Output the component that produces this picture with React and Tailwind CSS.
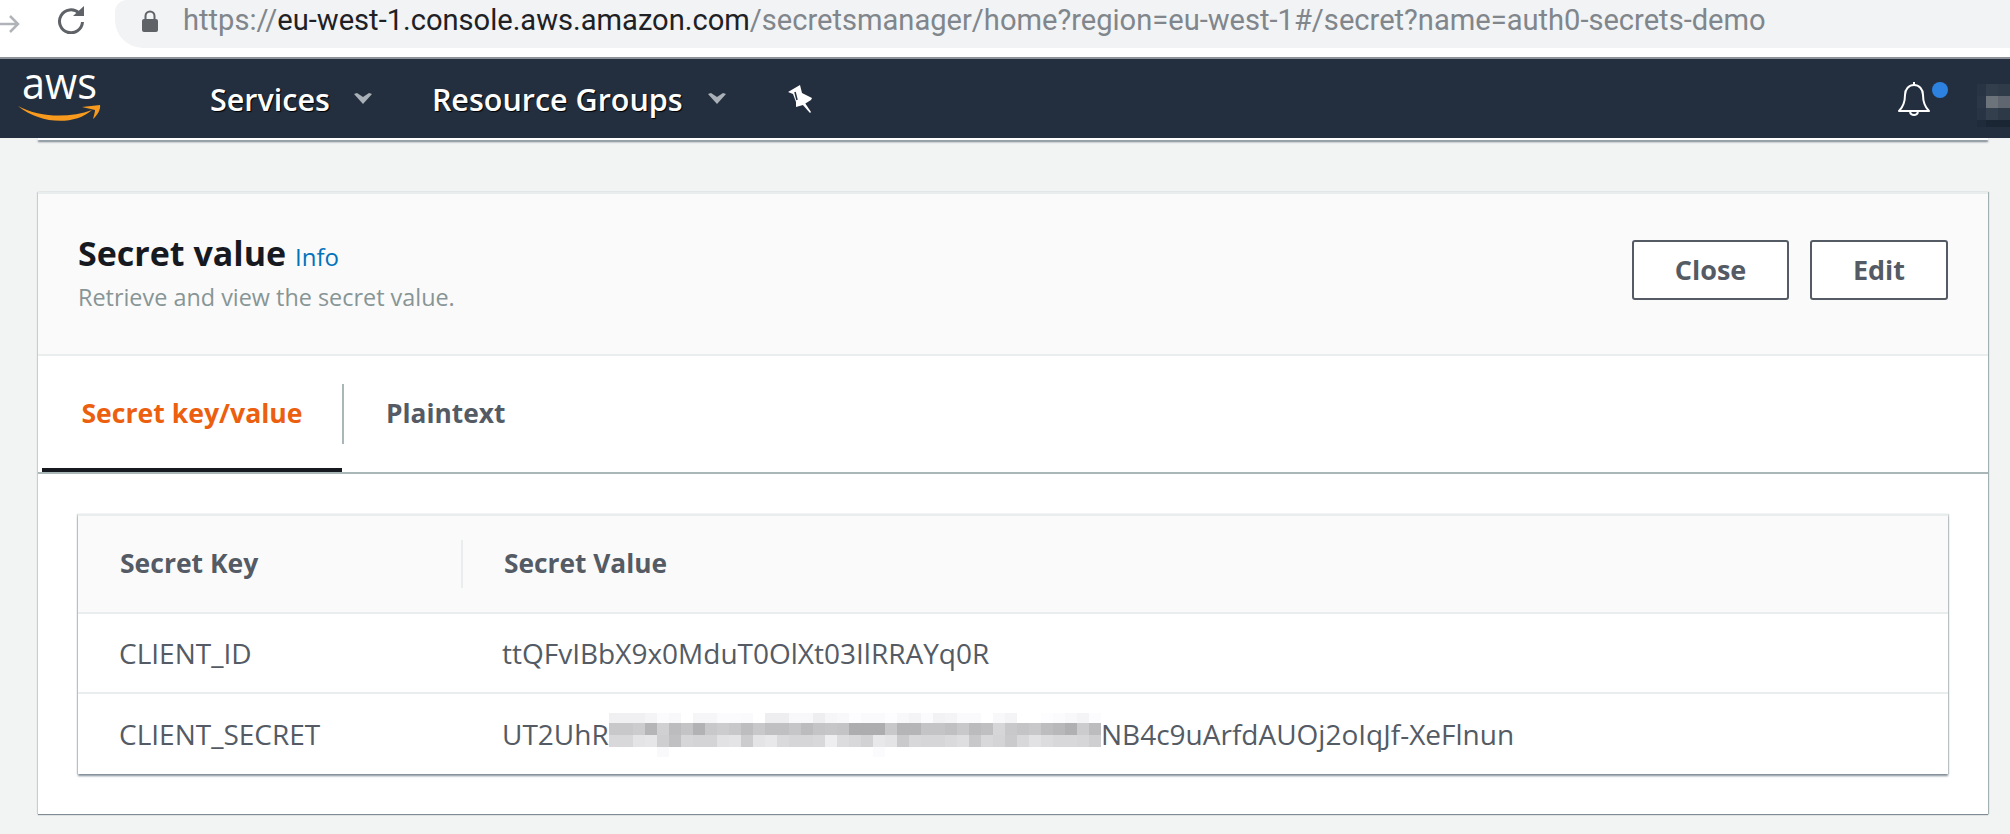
import React from 'react';

// blurred part of the secret, grey level per mosaic cell
const mosaicRows = [
  { h: 'h-[10px]', cells: [240, 240, 240, 244, 251, 248, 255, 246, 246, 251, 251, 250, 255, 238, 238, 248, 248, 238, 246, 248, 253, 250, 250, 253, 248, 244, 251, 242, 244, 250, 250, 255, 248, 244, 255, 255, 253, 251, 248, 244, 252] },
  { h: 'h-3', cells: [200, 200, 204, 181, 208, 188, 196, 178, 200, 204, 200, 189, 200, 192, 192, 198, 188, 196, 198, 196, 173, 173, 173, 200, 181, 181, 196, 196, 192, 200, 187, 191, 214, 200, 196, 200, 189, 184, 176, 204, 188] },
  { h: 'h-3', cells: [216, 216, 228, 230, 206, 192, 214, 212, 212, 226, 228, 204, 228, 232, 218, 214, 214, 216, 238, 220, 216, 210, 232, 228, 202, 216, 214, 214, 218, 222, 200, 216, 212, 202, 216, 226, 220, 216, 216, 214, 207] },
  { h: 'h-[10px]', cells: [255, 255, 255, 255, 249, 255, 255, 255, 255, 255, 255, 255, 255, 255, 255, 255, 255, 255, 255, 255, 255, 255, 251, 255, 255, 255, 255, 255, 255, 255, 255, 255, 255, 255, 255, 255, 255, 255, 255, 255, 255] },
];

const Mosaic = () => (
  <div className="absolute left-[107px] top-0 flex flex-col">
    {mosaicRows.map((row, i) => (
      <div key={i} className={`flex ${row.h}`}>
        {row.cells.map((v, j) => (
          <div key={j} className="w-3 h-full" style={{ backgroundColor: `rgb(${v},${v},${Math.min(v + 3, 255)})` }} />
        ))}
      </div>
    ))}
  </div>
);

const AwsLogo = () => (
  <svg width="90" height="66" viewBox="0 0 90 66" className="shrink-0 overflow-visible">
    <text x="6" y="39" fontFamily="Open Sans, sans-serif" fontSize="44" fill="#fff" textLength="75" lengthAdjust="spacingAndGlyphs">aws</text>
    <path d="M2 46 C24 58 54 58 76 50 C58 66 24 64 2 46Z" fill="#f79a1e" />
    <path d="M66 47 L84 45 C85 49 81 56 77 59 C78 55 79 52 79 50 C75 49 70 48 66 47Z" fill="#f79a1e" />
  </svg>
);

const Caret = () => (
  <svg width="18" height="11" viewBox="0 0 18 11" fill="#aab0b7" className="shrink-0">
    <path d="M0 1 L3 0 L9 4 L15 0 L18 1 L9 11Z" />
  </svg>
);

const Pin = () => (
  <svg width="26" height="30" viewBox="0 0 26 30" fill="#fff" className="shrink-0">
    <path d="M0 8 L12 1 L14 9 L24 14 L23 16 L15 21 L8 23 L8 18 L5 10Z" />
    <path d="M14 20 L17 19 L23 28 L22 29Z" />
    <path d="M7 8 L9 16" stroke="#232f3e" strokeWidth="1.5" />
  </svg>
);

const Bell = () => (
  <svg width="34" height="36" viewBox="0 0 34 36" fill="none" stroke="#fff" strokeWidth="2">
    <path d="M2 30 C7 25 8 20 8 14 C8 8 12 4 17 4 C22 4 26 8 26 14 C26 20 27 25 32 30Z" strokeLinejoin="round" />
    <path d="M17 1 V4" />
    <path d="M13 31 C14 35 20 35 21 31" />
  </svg>
);

const App = () => {
  return (
    <div className="w-[2010px] h-[834px] overflow-hidden bg-[#f2f3f3] font-['Open_Sans',sans-serif]">
      <div className="h-[57px] bg-white flex items-start">
        <svg width="22" height="20" viewBox="0 0 22 20" className="mt-[14px] shrink-0" fill="none" stroke="#b0b3b7" strokeWidth="2.5">
          <path d="M-2 10 H18 M10 2 L18 10 L10 18" />
        </svg>
        <svg width="28" height="28" viewBox="0 0 28 28" className="ml-[35px] mt-[6px] shrink-0" fill="none" stroke="#5f6368" strokeWidth="3">
          <path d="M22 7 A11.5 11.5 0 1 0 25.5 16" />
          <path d="M16 10 H27 V0 Z" fill="#5f6368" stroke="none" />
        </svg>
        <div className="ml-[30px] flex-1 h-[48px] bg-[#f1f3f4] rounded-bl-[28px] rounded-tl-[12px] flex items-center pl-[26px] pb-[6px] font-['Roboto',sans-serif] text-[29.1px] whitespace-nowrap">
          <svg width="18" height="22" viewBox="0 0 18 22" className="shrink-0" fill="#5f6368">
            <rect x="1" y="9" width="16" height="13" rx="2" />
            <path d="M4.5 9 V6 a4.5 4.5 0 0 1 9 0 V9" fill="none" stroke="#5f6368" strokeWidth="2" />
          </svg>
          <span className="ml-[24px] text-[#80868b]">https://</span>
          <span className="text-[#202124]">eu-west-1.console.aws.amazon.com</span>
          <span className="text-[#80868b]">/secretsmanager/home?region=eu-west-1#/secret?name=auth0-secrets-demo</span>
        </div>
      </div>

      <div className="relative h-[81px] bg-[#232f3e] border-t-2 border-[#8d9299] flex items-center text-white">
        <div className="ml-[16px] self-start mt-[1px]"><AwsLogo /></div>
        <div className="ml-[104px] mt-[2px] font-semibold text-[30.5px] [text-shadow:1px_1px_1px_#000]">Services</div>
        <div className="ml-[24px]"><Caret /></div>
        <div className="ml-[60px] mt-[2px] font-semibold text-[30.5px] [text-shadow:1px_1px_1px_#000]">Resource Groups</div>
        <div className="ml-[25px]"><Caret /></div>
        <div className="ml-[62px]"><Pin /></div>
        <div className="ml-auto relative mr-[79px]">
          <Bell />
          <div className="absolute left-[35px] top-[1px] w-4 h-4 rounded-full bg-[#2d82e0]" />
        </div>
        <div className="absolute left-[1977px] top-[25px] w-[33px] h-[43px] grid grid-cols-[9px_12px_12px] grid-rows-[12px_12px_12px_7px]">
          <div className="bg-[#283443]" /><div className="bg-[#323e4c]" /><div className="bg-[#2f3b49]" />
          <div className="bg-[#2b3746]" /><div className="bg-[#6d737b]" /><div className="bg-[#5f666f]" />
          <div className="bg-[#283443]" /><div className="bg-[#343f4d]" /><div className="bg-[#2d3947]" />
          <div className="bg-[#1f2b3a]" /><div className="bg-[#1b2635]" /><div className="bg-[#1b2635]" />
        </div>
      </div>

      <div className="ml-[38px] mr-[22px] h-[2px] bg-white shadow-[0_2px_2px_#6f7c86]" />

      <div className="ml-[38px] mr-[22px] mt-[52px] h-[622px] bg-white border-t-2 border-[#eaeded] shadow-[0_1px_1px_#7f8c96,-1px_0_1px_#d5dbdb,1px_0_1px_#aab7b8]">
        <div className="h-[162px] bg-[#fafafa] border-b-2 border-[#eaeded] flex items-center justify-between pl-[40px] pr-[40px]">
          <div className="mt-[-5px]">
            <div className="flex items-baseline">
              <span className="text-[34px] font-bold text-[#16191f] leading-[44px]">Secret value</span>
              <span className="ml-[9px] text-[24px] text-[#0073bb]">Info</span>
            </div>
            <div className="text-[23.4px] text-[#879596] leading-[32px] mt-[6px]">Retrieve and view the secret value.</div>
          </div>
          <div className="flex gap-[21px] mt-[-8px]">
            <button className="w-[157px] h-[60px] bg-white border-2 border-[#545b64] rounded-[3px] text-[27px] font-bold text-[#545b64]">Close</button>
            <button className="w-[138px] h-[60px] bg-white border-2 border-[#545b64] rounded-[3px] text-[27px] font-bold text-[#545b64]">Edit</button>
          </div>
        </div>

        <div className="h-[118px] border-b-2 border-[#aab7b8] flex items-center">
          <div className="relative w-[300px] ml-[4px] h-full flex items-center justify-center text-[26.6px] font-bold text-[#ec5f0e]">
            Secret key/value
            <div className="absolute bottom-0 left-0 right-0 h-[4px] bg-[#16191f]" />
          </div>
          <div className="w-[2px] h-[60px] bg-[#aab7b8]" />
          <div className="ml-[42px] text-[26.3px] font-bold text-[#545b64]">Plaintext</div>
        </div>

        <div className="mx-[40px] mt-[40px] bg-white border-t-2 border-[#eaeded] shadow-[0_2px_2px_#7f8c96,-1px_0_1px_#d5dbdb,1px_0_1px_#d5dbdb]">
          <div className="h-[98px] bg-[#fafafa] border-b-2 border-[#eaeded] flex items-center">
            <div className="w-[385px] pl-[42px] h-[48px] flex items-center border-r-2 border-[#eaeded] text-[26.5px] font-bold text-[#545b64]">Secret Key</div>
            <div className="pl-[41px] text-[26.3px] font-bold text-[#545b64]">Secret Value</div>
          </div>
          <div className="h-[80px] border-b-2 border-[#eaeded] flex items-center text-[28px] text-[#545b64]">
            <div className="w-[425px] pl-[41px]">CLIENT_ID</div>
            <div className="ml-[-1px]">ttQFvIBbX9x0MduT0OlXt03IlRRAYq0R</div>
          </div>
          <div className="h-[80px] flex items-center text-[28px] text-[#545b64]">
            <div className="w-[425px] pl-[41px]">CLIENT_SECRET</div>
            <div className="ml-[-1px] relative flex items-center whitespace-nowrap">
              <span className="w-[107px]">UT2UhRc</span>
              <span className="w-[492px]" />
              <span>NB4c9uArfdAUOj2oIqJf-XeFlnun</span>
              <Mosaic />
            </div>
          </div>
        </div>
      </div>
    </div>
  );
};

export default App;
